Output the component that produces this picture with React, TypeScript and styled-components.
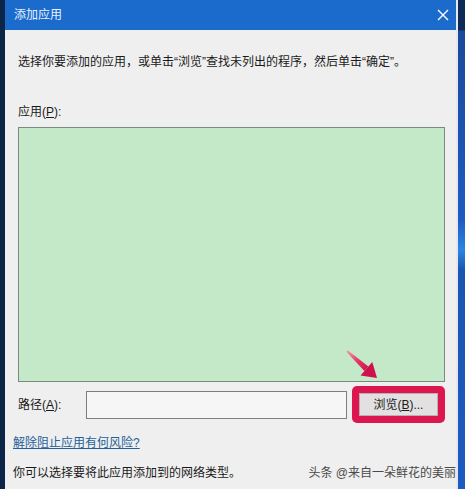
import styled, { createGlobalStyle } from "styled-components";

const GlobalStyle = createGlobalStyle`
  html, body {
    margin: 0;
    padding: 0;
    width: 465px;
    height: 489px;
    overflow: hidden;
    background: #0c2b55;
  }
`;

const Desktop = styled.div`
  display: flex;
  width: 465px;
  height: 489px;
  font-family: "Liberation Sans", "Noto Sans CJK SC", sans-serif;
  font-size: 12px;
  color: #1a1a1a;
`;

const LeftEdge = styled.div`
  width: 5px;
  background: #0a2548;
`;

const RightEdge = styled.div`
  flex: 1;
  background: linear-gradient(180deg, #0d2a56 0px, #0d2a56 30px, #1a4a9a 31px, #1c5cc0 220px, #2a86e0 250px, #1a56b0 270px, #1c5bbf 489px);
  border-left: 2px solid #e9e6f3;
`;

const Window = styled.div`
  position: relative;
  width: 451px;
  display: flex;
  flex-direction: column;
  background: #efefef;
`;

const TitleBar = styled.div`
  height: 30px;
  display: flex;
  align-items: center;
  justify-content: space-between;
  padding: 0 7px 0 9px;
  background: #1b6bcd;
  color: #e6f3ff;
`;

const Title = styled.span`
  line-height: 16px;
`;

const Close = styled.svg`
  width: 12px;
  height: 12px;
`;

const Content = styled.div`
  display: flex;
  flex-direction: column;
  padding: 24px 11px 0 8px;
`;

const Indented = styled.div`
  padding-left: 5px;
  display: flex;
  flex-direction: column;
`;

const Line = styled.div<{ $top?: number }>`
  line-height: 16px;
  margin-top: ${(p) => p.$top ?? 0}px;
  white-space: nowrap;
`;

const AppList = styled.div`
  margin-top: 7px;
  height: 253px;
  background: #c4e9c9;
  border: 1px solid #7b8a7e;
`;

const PathRow = styled.div`
  display: flex;
  align-items: center;
  margin-top: 4px;
  height: 37px;
`;

const PathLabel = styled.span`
  width: 69px;
  line-height: 16px;
`;

const PathInput = styled.div`
  width: 261px;
  height: 26px;
  background: #f6f6f6;
  border: 1px solid #7d7d7d;
`;

const Highlight = styled.div`
  margin-left: 5px;
  width: 94px;
  height: 37px;
  box-sizing: border-box;
  padding: 7px;
  border-radius: 5px;
  background: #dc1750;
  display: flex;
`;

const BrowseButton = styled.div`
  flex: 1;
  display: flex;
  align-items: center;
  justify-content: center;
  background: #e2e0e1;
  border: 1px solid #b8b0b2;
  line-height: 16px;
`;

const Key = styled.span`
  text-decoration: underline;
`;

const Link = styled.a`
  margin-top: 12px;
  line-height: 16px;
  color: #1e6299;
  text-decoration: underline;
`;

const BottomRow = styled.div`
  margin-top: 14px;
  margin-right: -11px;
  display: flex;
  justify-content: space-between;
  line-height: 16px;
`;

const Watermark = styled.span`
  color: #4a4a4a;
`;

const Arrow = styled.svg`
  position: absolute;
  left: 330px;
  top: 345px;
  width: 45px;
  height: 40px;
`;

export default function App() {
  return (
    <>
      <GlobalStyle />
      <Desktop>
        <LeftEdge />
        <Window>
          <TitleBar>
            <Title>添加应用</Title>
            <Close viewBox="0 0 12 12">
              <path d="M1 1 L11 11 M11 1 L1 11" stroke="#ffffff" strokeWidth="1.4" />
            </Close>
          </TitleBar>
          <Content>
            <Indented>
              <Line>选择你要添加的应用，或单击“浏览”查找未列出的程序，然后单击“确定”。</Line>
              <Line $top={34}>
                应用(<Key>P</Key>):
              </Line>
              <AppList />
              <PathRow>
                <PathLabel>
                  路径(<Key>A</Key>):
                </PathLabel>
                <PathInput />
                <Highlight>
                  <BrowseButton>
                    浏览(<Key>B</Key>)...
                  </BrowseButton>
                </Highlight>
              </PathRow>
            </Indented>
            <Link>解除阻止应用有何风险?</Link>
            <BottomRow>
              <span>你可以选择要将此应用添加到的网络类型。</span>
              <Watermark>头条 @来自一朵鲜花的美丽</Watermark>
            </BottomRow>
          </Content>
          <Arrow viewBox="0 0 45 40">
            <defs>
              <linearGradient id="arrowFill" x1="0" y1="0" x2="1" y2="1">
                <stop offset="0" stopColor="#f4a0b4" />
                <stop offset="0.5" stopColor="#e23a66" />
                <stop offset="1" stopColor="#cf0f47" />
              </linearGradient>
            </defs>
            <polygon
              points="11.3,6.8 12.7,5.2 33.4,21.5 29.4,26.1"
              fill="url(#arrowFill)"
            />
            <polygon points="25.5,30.6 37.3,17 42,33" fill="#d0104a" />
          </Arrow>
        </Window>
        <RightEdge />
      </Desktop>
    </>
  );
}
